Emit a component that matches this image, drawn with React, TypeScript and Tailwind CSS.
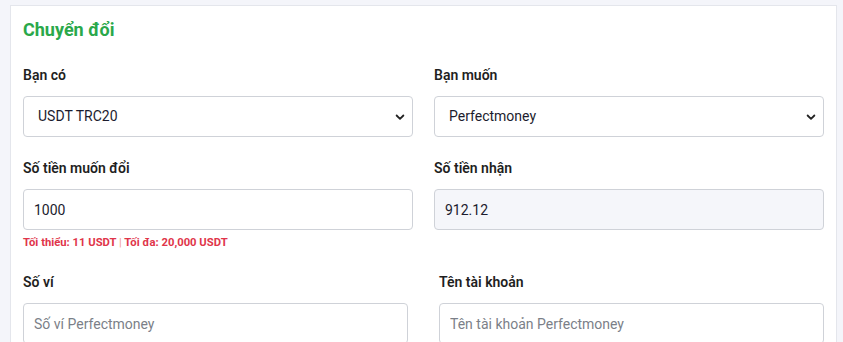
import React from 'react'

function Chevron() {
  return (
    <svg className="pointer-events-none absolute right-[7px] top-1/2 -translate-y-1/2" width="12" height="12" viewBox="0 0 16 16" fill="none">
      <path d="M3.5 6l4.5 4.5L12.5 6" stroke="#222" strokeWidth="2.4" strokeLinecap="round" strokeLinejoin="round" />
    </svg>
  )
}

function SelectField({ label, value, options }: { label: string; value: string; options: string[] }) {
  return (
    <div className="flex flex-col">
      <label className="text-[14px] leading-[21px] font-semibold text-[#1f1f1f] mb-[10px]">{label}</label>
      <div className="relative">
        <select
          defaultValue={value}
          className="w-full h-[41px] appearance-none rounded-[4px] border border-[#cfd2d8] bg-white pl-[14px] pr-8 text-[14px] text-[#1c1c2e] outline-none"
        >
          {options.map(o => (
            <option key={o}>{o}</option>
          ))}
        </select>
        <Chevron />
      </div>
    </div>
  )
}

export default function App() {
  return (
    <div className="min-h-screen bg-[#f4f5fa] pt-[5px] pl-[10px] pr-[6px] font-['Roboto',_'Liberation_Sans',_sans-serif]">
      <div className="bg-white border border-[#e4e6ec] pt-[10px] px-[12px] pb-6">
        <h2 className="text-[18px] leading-[27px] font-bold text-[#2aa84a] mb-[22px]">Chuyển đổi</h2>

        <div className="grid grid-cols-2 gap-x-[21px]">
          <SelectField label="Bạn có" value="USDT TRC20" options={['USDT TRC20', 'USDT ERC20', 'BTC']} />
          <SelectField label="Bạn muốn" value="Perfectmoney" options={['Perfectmoney', 'Payeer', 'Vietcombank']} />
        </div>

        <div className="grid grid-cols-2 gap-x-[21px] mt-[21px]">
          <div className="flex flex-col">
            <label className="text-[14px] leading-[21px] font-semibold text-[#1f1f1f] mb-[10px]">Số tiền muốn đổi</label>
            <input
              defaultValue="1000"
              className="h-[41px] rounded-[4px] border border-[#cfd2d8] bg-white px-[10px] text-[14px] text-[#1c1c2e] outline-none"
            />
            <p className="mt-[5px] text-[11.25px] leading-[16px] font-bold text-[#e0354a]">
              Tối thiểu: 11 USDT <span className="text-[#f0a08a] font-normal">|</span> Tối đa: 20,000 USDT
            </p>
          </div>
          <div className="flex flex-col">
            <label className="text-[14px] leading-[21px] font-semibold text-[#1f1f1f] mb-[10px]">Số tiền nhận</label>
            <input
              readOnly
              defaultValue="912.12"
              className="h-[41px] rounded-[4px] border border-[#cfd2d8] bg-[#f5f6fa] px-[10px] text-[14px] text-[#1c1c2e] outline-none"
            />
          </div>
        </div>

        <div className="grid grid-cols-2 gap-x-[31px] mt-[21px]">
          <div className="flex flex-col">
            <label className="text-[14px] leading-[21px] font-semibold text-[#1f1f1f] mb-[10px]">Số ví</label>
            <input
              placeholder="Số ví Perfectmoney"
              className="h-[41px] rounded-[4px] border border-[#cfd2d8] bg-white px-[10px] text-[14px] text-[#1c1c2e] placeholder:text-[#7b7f88] outline-none"
            />
          </div>
          <div className="flex flex-col">
            <label className="text-[14px] leading-[21px] font-semibold text-[#1f1f1f] mb-[10px]">Tên tài khoản</label>
            <input
              placeholder="Tên tài khoản Perfectmoney"
              className="h-[41px] rounded-[4px] border border-[#cfd2d8] bg-white px-[10px] text-[14px] text-[#1c1c2e] placeholder:text-[#7b7f88] outline-none"
            />
          </div>
        </div>
      </div>
    </div>
  )
}
